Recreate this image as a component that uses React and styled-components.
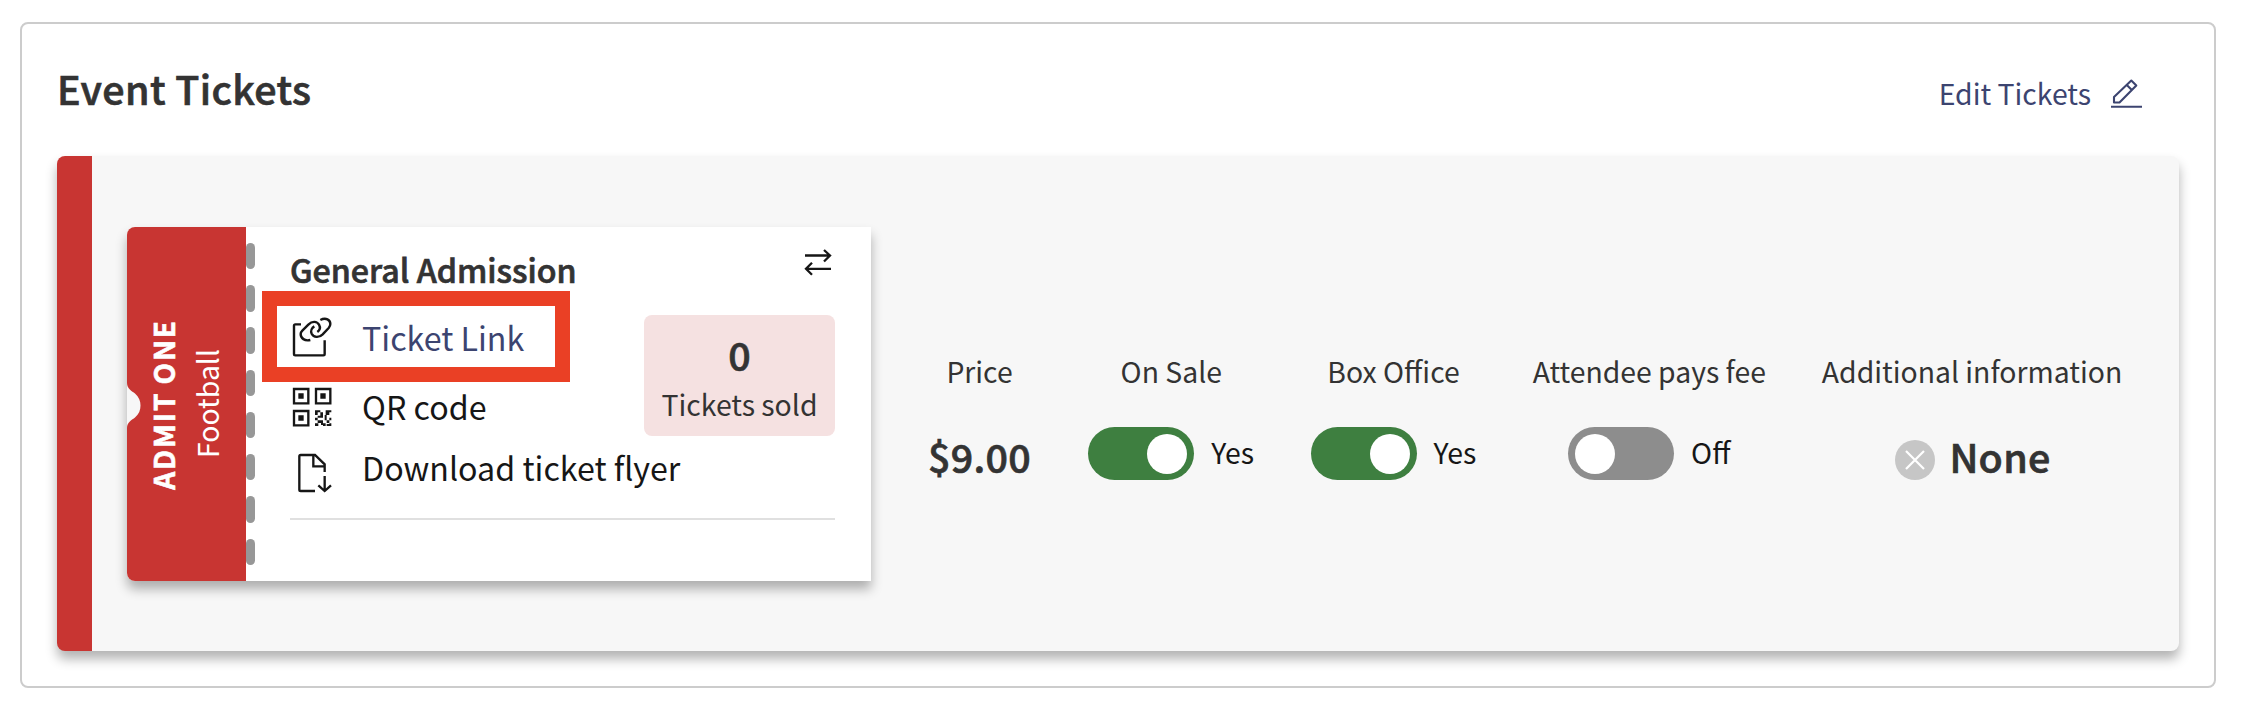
import React from "react";
import styled, { createGlobalStyle, css } from "styled-components";

const Global = createGlobalStyle`
  * { box-sizing: border-box; }
  body { margin: 0; background: #fff; color: #333; font-family: "Noto Sans CJK SC", "Noto Sans", sans-serif; }
`;

const semibold = css`
  font-weight: 500;
  -webkit-text-stroke: 0.7px currentColor;
`;

const Page = styled.div`
  padding: 22px 30px 26px 20px;
`;

const Section = styled.section`
  height: 666px;
  padding: 0 35px;
  border: 2px solid #ccc;
  border-radius: 8px;
`;

const Header = styled.header`
  height: 132px;
  display: flex;
  justify-content: space-between;
  padding: 36px 37px 0 0;
`;

const Title = styled.h1`
  margin: 0;
  font-size: 39.4px;
  line-height: 56px;
  letter-spacing: 0.4px;
  ${semibold}
`;

const EditLink = styled.a`
  display: flex;
  gap: 20px;
  margin-top: 6px;
  color: #3c4470;
  font-size: 28.4px;
  line-height: 54px;
  svg { margin-top: 13px; }
`;

const Panel = styled.div`
  height: 495px;
  display: flex;
  background: #f7f7f7;
  border-left: 35px solid #c83532;
  border-radius: 8px;
  box-shadow: 0 8px 12px rgba(0, 0, 0, 0.3);
  padding: 71px 57px 70px 35px;
`;

const Ticket = styled.article`
  width: 744px;
  height: 354px;
  display: flex;
  flex: none;
  background: #fff;
  border-radius: 8px 0 0 8px;
  box-shadow: 0 8px 12px rgba(0, 0, 0, 0.3);
`;

const Stub = styled.div`
  position: relative;
  width: 119px;
  flex: none;
  display: flex;
  align-items: center;
  padding-left: 15px;
  background: #c83532;
  border-radius: 8px 0 0 8px;
  color: #fff;
`;

const Notch = styled.svg`
  position: absolute;
  left: -0.5px;
  top: 156px;
`;

const StubText = styled.div`
  writing-mode: vertical-rl;
  transform: rotate(180deg);
  text-align: center;
  width: 43px;
  line-height: 43px;
  font-size: ${(p) => (p.$strong ? 28 : 28.4)}px;
  font-weight: ${(p) => (p.$strong ? 700 : 400)};
  letter-spacing: ${(p) => (p.$strong ? 1.9 : 0)}px;
  word-spacing: ${(p) => (p.$strong ? -1 : 0)}px;
  -webkit-text-stroke: ${(p) => (p.$strong ? 0.6 : 0)}px currentColor;
`;

const Perforation = styled.div`
  width: 9px;
  flex: none;
  display: flex;
  flex-direction: column;
  justify-content: space-between;
  padding: 16px 0;
`;

const Dash = styled.span`
  height: 26.3px;
  border-radius: 4.5px;
  background: #979797;
`;

const Details = styled.div`
  flex: 1;
  padding: 0 36px 0 35px;
`;

const DetailsTop = styled.div`
  height: 64px;
  display: flex;
  justify-content: space-between;
  svg { margin: 21px 3px 0 0; }
`;

const TicketName = styled.h2`
  margin: 20px 0 0;
  font-size: 32.2px;
  line-height: 44px;
  ${semibold}
`;

const DetailsBody = styled.div`
  height: 229px;
  display: flex;
  justify-content: space-between;
  border-bottom: 2px solid #e0e0e0;
`;

const Actions = styled.div`
  position: relative;
  width: 354px;
`;

const Highlight = styled.div`
  position: absolute;
  left: -28px;
  top: 0;
  width: 308px;
  height: 91px;
  border: 15px solid #ea4025;
`;

const Action = styled.a`
  display: flex;
  align-items: flex-start;
  gap: 30px;
  height: ${(p) => p.$height}px;
  padding: ${(p) => p.$pad}px 0 0 2px;
  color: ${(p) => (p.$link ? "#3c4470" : "#161616")};
  font-size: 32.2px;
  white-space: nowrap;
  svg { flex: none; }
`;

const ActionText = styled.span`
  line-height: ${(p) => p.$line}px;
`;

const Sold = styled.div`
  width: 191px;
  height: 121px;
  flex: none;
  margin-top: 24px;
  padding-top: 14px;
  border-radius: 8px;
  background: #f5e1e1;
  text-align: center;
`;

const SoldCount = styled.div`
  font-size: 39.4px;
  line-height: 50px;
  ${semibold}
`;

const SoldLabel = styled.div`
  font-size: 28.4px;
  line-height: 49px;
`;

const Stats = styled.div`
  flex: 1;
  display: flex;
  justify-content: space-between;
  padding: 124px 0 0 56px;
`;

const Stat = styled.div`
  width: ${(p) => p.$width}px;
  display: flex;
  flex-direction: column;
  align-items: center;
  white-space: nowrap;
`;

const StatLabel = styled.div`
  font-size: 28.35px;
  line-height: 40px;
`;

const StatValue = styled.div`
  height: 53px;
  margin-top: 36px;
  display: flex;
  align-items: center;
  gap: 17px;
  color: #161616;
  font-size: 28.4px;
`;

const Amount = styled.span`
  margin-top: 5px;
  color: #333;
  font-size: 39.4px;
  line-height: 50px;
  letter-spacing: 0.3px;
  ${semibold}
`;

const Toggle = styled.span`
  width: 106px;
  height: 53px;
  display: flex;
  align-items: center;
  justify-content: ${(p) => (p.$on ? "flex-end" : "flex-start")};
  padding: 0 7px;
  border-radius: 27px;
  background: ${(p) => (p.$on ? "#3e7f40" : "#8d8d8d")};
  &::after {
    content: "";
    width: 40px;
    height: 40px;
    border-radius: 50%;
    background: #fff;
  }
`;

const ToggleText = styled.span`
  margin-top: -4px;
  line-height: 50px;
`;

const None = styled.span`
  display: flex;
  align-items: center;
  gap: 14px;
  padding-left: 2px;
  svg { margin-top: 13px; }
`;

const PencilIcon = () => (
  <svg width="31" height="30" viewBox="0 0 31 30" fill="none" stroke="#3c4470" strokeWidth="2.100">
    <path d="M0 27.700h31M3 23.500V18L20.300 1.500L25.300 6.500L8.500 23.500ZM15.800 6L20.800 11" strokeLinejoin="round" />
  </svg>
);

const SwapIcon = () => (
  <svg width="28" height="28" viewBox="0 0 28 28" fill="none" stroke="#161616" strokeWidth="2.300">
    <path d="M1 7.500H26M20 2l6 5.500l-6 6M27 20.800H2M8 14.800l-6 6l6 6" />
  </svg>
);

const LinkIcon = () => (
  <svg width="40" height="41" viewBox="156 258 120 123" fill="none" stroke="#161616" strokeWidth="7.200">
    <path d="M183 283H166Q162 283 162 287V372Q162 376 166 376H250Q254 376 254 372V331" />
    <path d="M211 330C194 334 182 325 182 312Q182 307 187 302L205 284C217 272 231 274 237 284C242 293 239 301 232 306" />
    <path d="M241 270C258 261 271 270 271 282Q271 288 266 294L248 313C237 324 221 323 215 311C211 302 216 293 223 289" />
  </svg>
);

const QrIcon = () => (
  <svg width="40" height="41" viewBox="156 471 120 123" fill="none" stroke="#161616" strokeWidth="7">
    <path d="M162 477h43v43h-43zM228 477h43v43h-43zM162 543h43v43h-43z" />
    <path d="M175 490h16v16h-16zM241 490h16v16h-16zM175 556h16v16h-16z" fill="#161616" stroke="none" />
    <path fill="#161616" stroke="none" d="M225 541h16v6h-8v8h-8zM241 547h8v16h-16v-6h8zM257 541h17v6h-6v8h-8v16h-6v-16h3zM225 563h8v8h16v14h-6v-6h-10v-8h-8zM225 580h10v8h-10zM249 580h8v8h-8zM260 571h8v8h-8zM268 563h6v8h-6zM268 580h6v8h-14v-6h8z" />
  </svg>
);

const FileIcon = () => (
  <svg width="40" height="41" viewBox="156 669 120 123" fill="none" stroke="#161616" strokeWidth="7">
    <path d="M225 783H182Q178 783 178 779V679Q178 675 182 675H225L254 703V726M220 677V709H254M254 738V783M235 766L254 783L273 766" />
  </svg>
);

const CloseIcon = () => (
  <svg width="40" height="40" viewBox="0 0 40 40">
    <circle cx="20" cy="20" r="20" fill="#c6c6c6" />
    <path d="M11 11L29 29M29 11L11 29" stroke="#fff" strokeWidth="2.200" />
  </svg>
);

const Switch = ({ on, text }) => (
  <>
    <Toggle $on={on} role="switch" aria-checked={on} />
    <ToggleText>{text}</ToggleText>
  </>
);

const stats = [
  { label: "Price", width: 105, value: <Amount>$9.00</Amount> },
  { label: "On Sale", width: 166, value: <Switch on text="Yes" /> },
  { label: "Box Office", width: 166, value: <Switch on text="Yes" /> },
  { label: "Attendee pays fee", width: 233, value: <Switch on={false} text="Off" /> },
  { label: "Additional information", width: 300, value: <None><CloseIcon /><Amount>None</Amount></None> },
];

export default function App() {
  return (
    <Page>
      <Global />
      <Section>
        <Header>
          <Title>Event Tickets</Title>
          <EditLink>Edit Tickets<PencilIcon /></EditLink>
        </Header>
        <Panel>
          <Ticket>
            <Stub>
              <Notch width="14" height="45" viewBox="0 0 14 45">
                <path d="M0 0C0 6 5 8 8 10.500C12 14 13.500 18 13.500 22.500S12 31 8 34.500C5 37 0 39 0 45Z" fill="#f7f7f7" />
              </Notch>
              <StubText $strong>ADMIT ONE</StubText>
              <StubText>Football</StubText>
            </Stub>
            <Perforation>
              {Array.from({ length: 8 }, (_, i) => <Dash key={i} />)}
            </Perforation>
            <Details>
              <DetailsTop>
                <TicketName>General Admission</TicketName>
                <SwapIcon />
              </DetailsTop>
              <DetailsBody>
                <Actions>
                  <Highlight />
                  <Action $link $height={96} $pad={25}><LinkIcon /><ActionText $line={42}>Ticket Link</ActionText></Action>
                  <Action $height={66} $pad={0}><QrIcon /><ActionText $line={38}>QR code</ActionText></Action>
                  <Action $height={65} $pad={0}><FileIcon /><ActionText $line={28}>Download ticket flyer</ActionText></Action>
                </Actions>
                <Sold>
                  <SoldCount>0</SoldCount>
                  <SoldLabel>Tickets sold</SoldLabel>
                </Sold>
              </DetailsBody>
            </Details>
          </Ticket>
          <Stats>
            {stats.map((s) => (
              <Stat key={s.label} $width={s.width}>
                <StatLabel>{s.label}</StatLabel>
                <StatValue>{s.value}</StatValue>
              </Stat>
            ))}
          </Stats>
        </Panel>
      </Section>
    </Page>
  );
}
